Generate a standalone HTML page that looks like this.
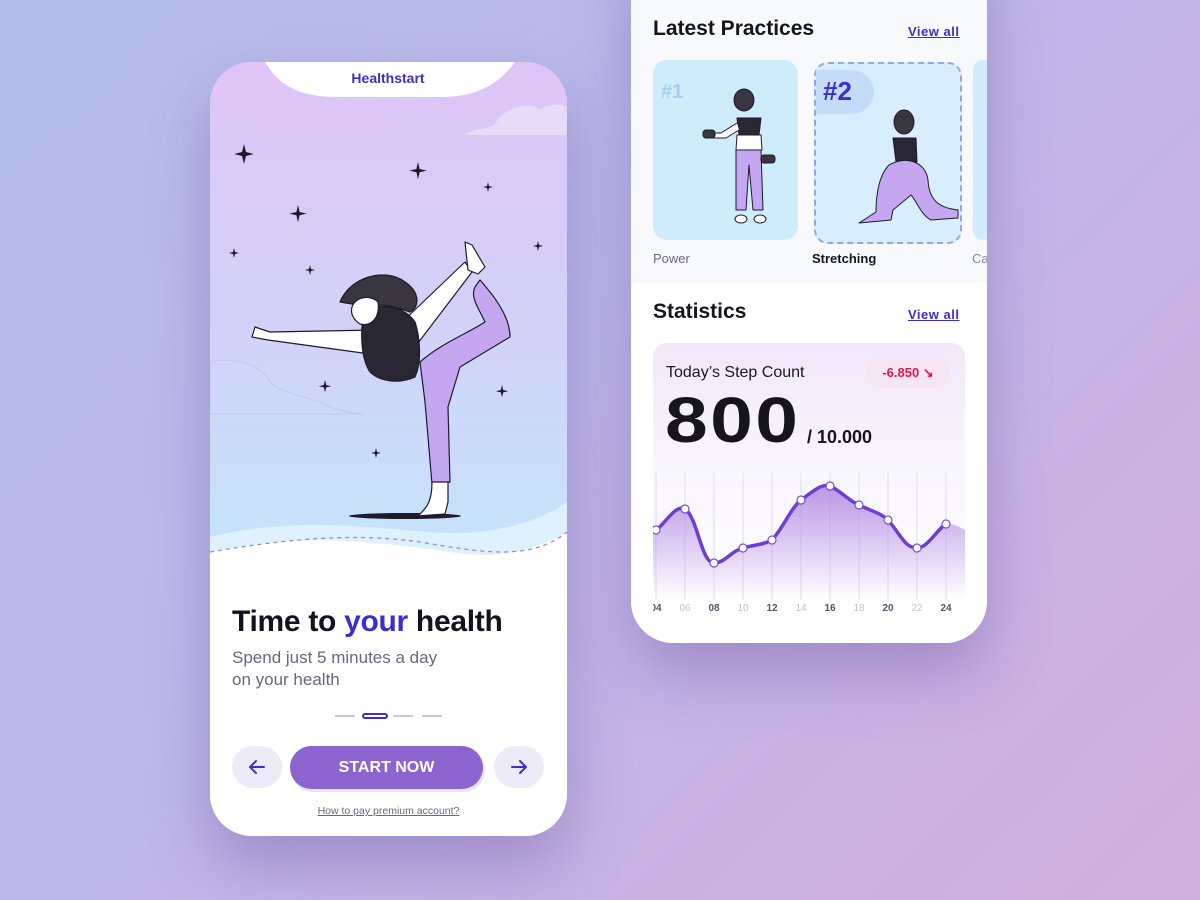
<!DOCTYPE html>
<html><head><meta charset="utf-8"><style>
*{margin:0;padding:0;box-sizing:border-box}
body{width:1200px;height:900px;overflow:hidden;position:relative;font-family:"Liberation Sans",sans-serif;
background:linear-gradient(135deg,#b5bde9 0%,#bcb9ea 40%,#c9b2e2 75%,#d0b0de 100%);}
.phone{position:absolute;background:#fff;overflow:hidden;box-shadow:0 30px 60px rgba(90,70,150,.35)}
#p1{left:210px;top:62px;width:357px;height:774px;border-radius:42px}
#p2{left:631px;top:-60px;width:356px;height:703px;border-radius:0 0 42px 42px;background:#f7f9fd}
.abs{position:absolute}
</style></head><body>

<div class="phone" id="p1">
<svg class="abs" style="left:0;top:0" width="357" height="774" viewBox="0 0 357 774">
<defs>
<linearGradient id="sky" x1="0" y1="0" x2="0" y2="1">
<stop offset="0" stop-color="#dfc4f6"/><stop offset=".5" stop-color="#d2d2f8"/><stop offset="1" stop-color="#c4e6fb"/></linearGradient>
</defs>
<rect width="357" height="520" fill="url(#sky)"/>
<path d="M0 475 C80 455 150 465 220 470 C280 475 330 460 357 440 L357 520 L0 520Z" fill="#dff1fd"/>
<path d="M0 490 C90 470 170 480 240 490 C300 500 340 480 357 470 L357 774 L0 774Z" fill="#fff"/>
<path d="M0 490 C70 478 140 470 210 480 C270 490 320 500 357 470" stroke="#8e8fd6" stroke-width="1.3" stroke-dasharray="4 4" fill="none"/>
<path d="M55 0 C70 25 90 35 130 35 L230 35 C270 35 290 20 305 0Z" fill="#fff"/>
<path d="M255 73 C265 65 280 68 285 62 C295 45 320 38 330 48 C340 40 352 42 357 45 L357 73Z" fill="#e7dbf8"/>
<path d="M0 300 C20 295 50 300 60 320 C70 330 95 335 110 340 C120 345 130 350 153 352 L0 352Z" fill="none" stroke="#c6c6ee" stroke-width="1"/>
<g fill="#1e1a2c">
<path d="M34 82 l2 8 8 2 -8 2 -2 8 -2 -8 -8 -2 8 -2z"/>
<path d="M208 100 l1.6 7 7 1.6 -7 1.6 -1.6 7 -1.6 -7 -7 -1.6 7 -1.6z"/>
<path d="M278 120 l1 4 4 1 -4 1 -1 4 -1 -4 -4 -1 4 -1z"/>
<path d="M88 143 l1.6 7 7 1.6 -7 1.6 -1.6 7 -1.6 -7 -7 -1.6 7 -1.6z"/>
<path d="M24 186 l1 4 4 1 -4 1 -1 4 -1 -4 -4 -1 4 -1z"/>
<path d="M100 203 l1 4 4 1 -4 1 -1 4 -1 -4 -4 -1 4 -1z"/>
<path d="M328 179 l1 4 4 1 -4 1 -1 4 -1 -4 -4 -1 4 -1z"/>
<path d="M115 318 l1.2 5 5 1.2 -5 1.2 -1.2 5 -1.2 -5 -5 -1.2 5 -1.2z"/>
<path d="M292 323 l1.2 5 5 1.2 -5 1.2 -1.2 5 -1.2 -5 -5 -1.2 5 -1.2z"/>
<path d="M166 386 l1 4 4 1 -4 1 -1 4 -1 -4 -4 -1 4 -1z"/>
<ellipse cx="195" cy="454" rx="56" ry="3"/>
</g>
<g stroke="#1e1a2c" stroke-width="1.2" stroke-linejoin="round">
<path d="M165 268 L60 270 L45 265 L42 275 L58 278 L160 292Z" fill="#fff"/>
<path d="M190 262 L255 200 L262 210 L205 285Z" fill="#fff"/>
<path d="M255 180 L262 183 L275 205 L268 212 L258 208Z" fill="#fff"/>
<path d="M270 218 C285 235 300 255 300 275 L250 305 L238 345 L240 420 L222 422 L215 340 L210 300 C230 282 260 270 275 260 C268 245 260 235 265 225Z" fill="#c5a6f0"/>
<path d="M222 420 L238 420 L238 440 L235 452 L208 454 C215 447 222 442 222 420Z" fill="#fff"/>
<path d="M155 248 C170 240 195 245 205 260 C210 275 212 300 205 315 C190 322 170 320 160 310 C150 295 150 265 155 248Z" fill="#2a2735"/>
<path d="M130 240 C140 215 175 205 195 220 C210 230 210 245 200 250 C185 245 170 240 160 245Z" fill="#3a3640"/>
<path d="M142 245 C145 235 160 232 168 240 C170 255 162 265 150 262 C144 258 140 252 142 245Z" fill="#fff"/>
</g>
<text x="178" y="21" text-anchor="middle" font-family="Liberation Sans" font-weight="700" font-size="14" fill="#3f2fbf">Healthstart</text>
</svg>
<div class="abs" style="left:22px;top:543px;font-size:30px;font-weight:700;color:#14121e;letter-spacing:-.3px">Time to <span style="color:#3b2ed0">your</span> health</div>
<div class="abs" style="left:22px;top:585px;font-size:17px;line-height:22px;color:#6a6580">Spend just 5 minutes a day<br>on your health</div>
<div class="abs" style="left:125px;top:653px;width:20px;height:2px;background:#c9c7d3"></div>
<div class="abs" style="left:152px;top:651px;width:26px;height:6px;border:2px solid #3b2ed0;border-radius:4px"></div>
<div class="abs" style="left:183px;top:653px;width:20px;height:2px;background:#c9c7d3"></div>
<div class="abs" style="left:212px;top:653px;width:20px;height:2px;background:#c9c7d3"></div>
<div class="abs" style="left:22px;top:684px;width:50px;height:42px;border-radius:21px;background:#eeebf8">
<svg width="50" height="42"><path d="M32 21H18M24 15l-6 6 6 6" stroke="#3b2ed0" stroke-width="2" fill="none" stroke-linecap="round" stroke-linejoin="round"/></svg></div>
<div class="abs" style="left:80px;top:684px;width:193px;height:43px;border-radius:22px;background:#8b64d0;color:#fff;font-weight:700;font-size:16px;text-align:center;line-height:43px;box-shadow:2px 3px 0 #e8e2f5">START NOW</div>
<div class="abs" style="left:284px;top:684px;width:50px;height:42px;border-radius:21px;background:#eeebf8">
<svg width="50" height="42"><path d="M18 21H32M26 15l6 6 -6 6" stroke="#3b2ed0" stroke-width="2" fill="none" stroke-linecap="round" stroke-linejoin="round"/></svg></div>
<div class="abs" style="left:0;width:357px;top:743px;text-align:center;font-size:10.5px;color:#6a6580;text-decoration:underline">How to pay premium account?</div>
</div>

<div class="phone" id="p2">
<div class="abs" style="left:22px;top:77px;font-size:21px;font-weight:700;color:#16141f">Latest Practices</div>
<div class="abs" style="left:277px;top:84px;font-size:13px;font-weight:700;color:#3b2ed0;text-decoration:underline;letter-spacing:.5px">View all</div>
<div class="abs" style="left:22px;top:120px;width:145px;height:180px;border-radius:14px;background:#cfecfb"></div>
<div class="abs" style="left:30px;top:141px;font-size:20px;font-weight:700;color:#a7d0ee">#1</div>
<div class="abs" style="left:183px;top:122px;width:148px;height:182px;border-radius:14px;background:#d9eefc;border:2px dashed #98a6e0"></div>
<div class="abs" style="left:185px;top:130px;width:58px;height:44px;border-radius:0 22px 22px 0;background:#c5dcf8"></div>
<div class="abs" style="left:192px;top:136px;font-size:26px;font-weight:700;color:#3b2ed0">#2</div>
<div class="abs" style="left:342px;top:120px;width:20px;height:180px;border-radius:14px;background:#d3ecfb"></div>
<svg class="abs" style="left:0;top:0" width="356" height="320">
<g stroke="#1e1a2c" stroke-width="1" stroke-linejoin="round">
<path d="M105 210 L105 270 L115 270 L118 225 L122 270 L132 270 L130 210Z" fill="#c5a6f0"/>
<path d="M106 178 L130 178 L128 195 L108 195Z" fill="#2a2735"/>
<path d="M106 195 L130 195 L131 210 L105 210Z" fill="#fff"/>
<ellipse cx="113" cy="160" rx="10" ry="11" fill="#3a3640"/>
<path d="M106 183 L90 193 L78 193 L80 198 L95 198 L108 190" fill="#fff"/>
<rect x="72" y="190" width="12" height="8" rx="3" fill="#3a3640"/>
<rect x="130" y="215" width="14" height="8" rx="3" fill="#3a3640"/>
<ellipse cx="110" cy="279" rx="6" ry="4" fill="#fff"/><ellipse cx="129" cy="279" rx="6" ry="4" fill="#fff"/>
<ellipse cx="273" cy="182" rx="10" ry="12" fill="#3a3640"/>
<path d="M262 198 L285 198 L286 222 L265 222Z" fill="#2a2735"/>
<path d="M258 225 C275 215 295 222 297 240 C298 262 310 268 327 270 L327 278 L300 280 C290 275 285 260 280 255 L262 270 L260 280 L228 283 L245 272 C245 255 248 235 258 225Z" fill="#c5a6f0"/>
</g>
</svg>
<div class="abs" style="left:22px;top:311px;font-size:13px;color:#6b6880">Power</div>
<div class="abs" style="left:181px;top:311px;font-size:13px;color:#16141f;font-weight:700">Stretching</div>
<div class="abs" style="left:341px;top:311px;font-size:13px;color:#8a889a">Ca</div>
<div class="abs" style="left:0;top:343px;width:356px;height:360px;background:#fff"></div>
<div class="abs" style="left:22px;top:360px;font-size:21px;font-weight:700;color:#16141f">Statistics</div>
<div class="abs" style="left:277px;top:367px;font-size:13px;font-weight:700;color:#3b2ed0;text-decoration:underline;letter-spacing:.5px">View all</div>
<div class="abs" style="left:22px;top:403px;width:312px;height:282px;border-radius:14px;background:linear-gradient(#f1e8fa,#f8f5fd 40%,#fff);overflow:hidden">
<div class="abs" style="left:13px;top:21px;font-size:16px;color:#1a1826">Today’s Step Count</div>
<div class="abs" style="left:212px;top:15px;width:86px;height:30px;border-radius:15px;background:#f4e6f2;color:#e0154e;font-weight:700;font-size:13px;text-align:center;line-height:30px">-6.850 ↘</div>
<div class="abs" style="left:12px;top:40px;font-size:64px;font-weight:700;color:#16141f;letter-spacing:2px;transform:scaleX(1.2);transform-origin:left">800</div>
<div class="abs" style="left:154px;top:84px;font-size:18px;font-weight:700;color:#16141f">/ 10.000</div>
<svg class="abs" style="left:0;top:0" width="312" height="282">
<defs><linearGradient id="ar" x1="0" y1="0" x2="0" y2="1"><stop offset="0" stop-color="#a97fe0"/><stop offset=".8" stop-color="#a97fe0" stop-opacity="0"/></linearGradient></defs>
<g transform="translate(0,60)">
<g stroke="#e2dcec" stroke-width="1">
<path d="M3 70V197M32 70V197M61 70V197M90 70V197M119 70V197M148 70V197M177 70V197M206 70V197M235 70V197M264 70V197M293 70V197"/></g>
<path d="M0 129 C10 125 22 100 32 106 C45 115 48 160 61 160 C72 160 78 148 90 145 C100 142 110 142 119 137 C130 125 138 105 148 97 C158 90 168 80 177 83 C188 88 196 98 206 102 C218 108 228 110 235 117 C248 132 252 145 264 145 C275 145 285 125 293 121 C300 120 306 124 312 127 L312 222 L0 222Z" fill="url(#ar)" opacity=".8"/>
<path d="M0 129 C10 125 22 100 32 106 C45 115 48 160 61 160 C72 160 78 148 90 145 C100 142 110 142 119 137 C130 125 138 105 148 97 C158 90 168 80 177 83 C188 88 196 98 206 102 C218 108 228 110 235 117 C248 132 252 145 264 145 C275 145 285 125 293 121" fill="none" stroke="#6c3fd0" stroke-width="3.5"/>
<g fill="#fff" stroke="#7a4fd4" stroke-width="1.2">
<circle cx="3" cy="127" r="4"/><circle cx="32" cy="106" r="4"/><circle cx="61" cy="160" r="4"/><circle cx="90" cy="145" r="4"/><circle cx="119" cy="137" r="4"/><circle cx="148" cy="97" r="4"/><circle cx="177" cy="83" r="4"/><circle cx="206" cy="102" r="4"/><circle cx="235" cy="117" r="4"/><circle cx="264" cy="145" r="4"/><circle cx="293" cy="121" r="4"/></g>
<g font-family="Liberation Sans" font-size="10" font-weight="700" text-anchor="middle">
<text x="3" y="208" fill="#55526a">04</text><text x="32" y="208" fill="#c4c1d0" font-weight="400">06</text><text x="61" y="208" fill="#55526a">08</text><text x="90" y="208" fill="#c4c1d0" font-weight="400">10</text><text x="119" y="208" fill="#55526a">12</text><text x="148" y="208" fill="#c4c1d0" font-weight="400">14</text><text x="177" y="208" fill="#55526a">16</text><text x="206" y="208" fill="#c4c1d0" font-weight="400">18</text><text x="235" y="208" fill="#55526a">20</text><text x="264" y="208" fill="#c4c1d0" font-weight="400">22</text><text x="293" y="208" fill="#55526a">24</text></g>
</g>
</svg>
</div>
</div>
</body></html>
